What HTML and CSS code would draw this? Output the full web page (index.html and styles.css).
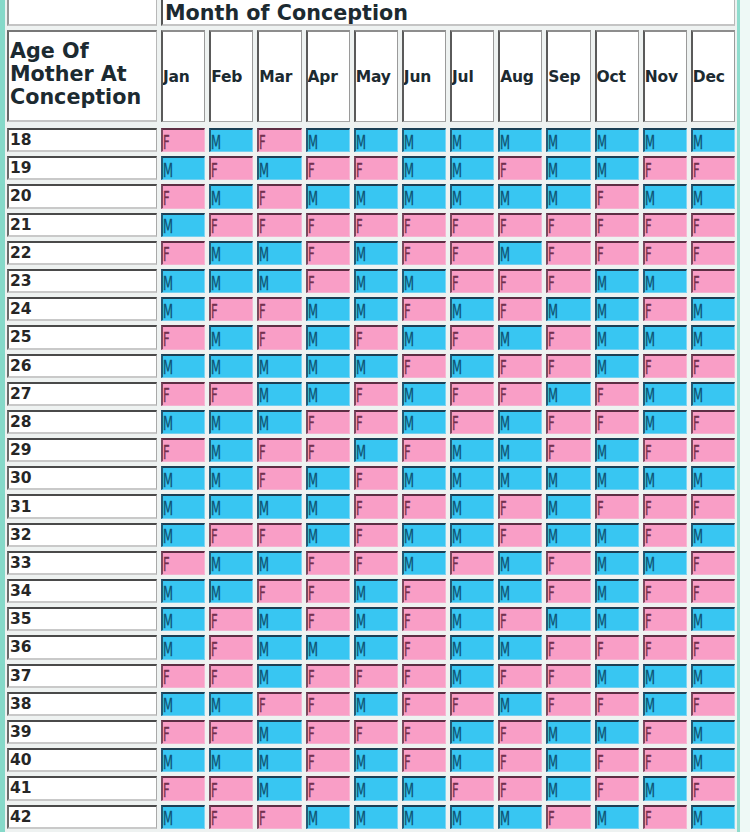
FILE: index.html
```html
<!DOCTYPE html>
<html lang="en">
<head>
<meta charset="utf-8">
<title>Chinese Gender Chart</title>
<link rel="stylesheet" href="styles.css">
</head>
<body>
<div class="page">
  <div class="grid head">
    <div class="hcell blank"></div>
    <div class="hcell title">Month of Conception</div>
    <div class="hcell agehead">Age Of<br>Mother At<br>Conception</div>
    <div class="hcell mon">Jan</div>
    <div class="hcell mon">Feb</div>
    <div class="hcell mon">Mar</div>
    <div class="hcell mon">Apr</div>
    <div class="hcell mon">May</div>
    <div class="hcell mon">Jun</div>
    <div class="hcell mon">Jul</div>
    <div class="hcell mon">Aug</div>
    <div class="hcell mon">Sep</div>
    <div class="hcell mon">Oct</div>
    <div class="hcell mon">Nov</div>
    <div class="hcell mon">Dec</div>
  </div>
  <div class="grid body">
    <div class="age">18</div><div class="c f"><span>F</span></div><div class="c m"><span>M</span></div><div class="c f"><span>F</span></div><div class="c m"><span>M</span></div><div class="c m"><span>M</span></div><div class="c m"><span>M</span></div><div class="c m"><span>M</span></div><div class="c m"><span>M</span></div><div class="c m"><span>M</span></div><div class="c m"><span>M</span></div><div class="c m"><span>M</span></div><div class="c m"><span>M</span></div>
    <div class="age">19</div><div class="c m"><span>M</span></div><div class="c f"><span>F</span></div><div class="c m"><span>M</span></div><div class="c f"><span>F</span></div><div class="c f"><span>F</span></div><div class="c m"><span>M</span></div><div class="c m"><span>M</span></div><div class="c f"><span>F</span></div><div class="c m"><span>M</span></div><div class="c m"><span>M</span></div><div class="c f"><span>F</span></div><div class="c f"><span>F</span></div>
    <div class="age">20</div><div class="c f"><span>F</span></div><div class="c m"><span>M</span></div><div class="c f"><span>F</span></div><div class="c m"><span>M</span></div><div class="c m"><span>M</span></div><div class="c m"><span>M</span></div><div class="c m"><span>M</span></div><div class="c m"><span>M</span></div><div class="c m"><span>M</span></div><div class="c f"><span>F</span></div><div class="c m"><span>M</span></div><div class="c m"><span>M</span></div>
    <div class="age">21</div><div class="c m"><span>M</span></div><div class="c f"><span>F</span></div><div class="c f"><span>F</span></div><div class="c f"><span>F</span></div><div class="c f"><span>F</span></div><div class="c f"><span>F</span></div><div class="c f"><span>F</span></div><div class="c f"><span>F</span></div><div class="c f"><span>F</span></div><div class="c f"><span>F</span></div><div class="c f"><span>F</span></div><div class="c f"><span>F</span></div>
    <div class="age">22</div><div class="c f"><span>F</span></div><div class="c m"><span>M</span></div><div class="c m"><span>M</span></div><div class="c f"><span>F</span></div><div class="c m"><span>M</span></div><div class="c f"><span>F</span></div><div class="c f"><span>F</span></div><div class="c m"><span>M</span></div><div class="c f"><span>F</span></div><div class="c f"><span>F</span></div><div class="c f"><span>F</span></div><div class="c f"><span>F</span></div>
    <div class="age">23</div><div class="c m"><span>M</span></div><div class="c m"><span>M</span></div><div class="c m"><span>M</span></div><div class="c f"><span>F</span></div><div class="c m"><span>M</span></div><div class="c m"><span>M</span></div><div class="c f"><span>F</span></div><div class="c f"><span>F</span></div><div class="c f"><span>F</span></div><div class="c m"><span>M</span></div><div class="c m"><span>M</span></div><div class="c f"><span>F</span></div>
    <div class="age">24</div><div class="c m"><span>M</span></div><div class="c f"><span>F</span></div><div class="c f"><span>F</span></div><div class="c m"><span>M</span></div><div class="c m"><span>M</span></div><div class="c f"><span>F</span></div><div class="c m"><span>M</span></div><div class="c f"><span>F</span></div><div class="c m"><span>M</span></div><div class="c m"><span>M</span></div><div class="c f"><span>F</span></div><div class="c m"><span>M</span></div>
    <div class="age">25</div><div class="c f"><span>F</span></div><div class="c m"><span>M</span></div><div class="c f"><span>F</span></div><div class="c m"><span>M</span></div><div class="c f"><span>F</span></div><div class="c m"><span>M</span></div><div class="c f"><span>F</span></div><div class="c m"><span>M</span></div><div class="c f"><span>F</span></div><div class="c m"><span>M</span></div><div class="c m"><span>M</span></div><div class="c m"><span>M</span></div>
    <div class="age">26</div><div class="c m"><span>M</span></div><div class="c m"><span>M</span></div><div class="c m"><span>M</span></div><div class="c m"><span>M</span></div><div class="c m"><span>M</span></div><div class="c f"><span>F</span></div><div class="c m"><span>M</span></div><div class="c f"><span>F</span></div><div class="c f"><span>F</span></div><div class="c m"><span>M</span></div><div class="c f"><span>F</span></div><div class="c f"><span>F</span></div>
    <div class="age">27</div><div class="c f"><span>F</span></div><div class="c f"><span>F</span></div><div class="c m"><span>M</span></div><div class="c m"><span>M</span></div><div class="c f"><span>F</span></div><div class="c m"><span>M</span></div><div class="c f"><span>F</span></div><div class="c f"><span>F</span></div><div class="c m"><span>M</span></div><div class="c f"><span>F</span></div><div class="c m"><span>M</span></div><div class="c m"><span>M</span></div>
    <div class="age">28</div><div class="c m"><span>M</span></div><div class="c m"><span>M</span></div><div class="c m"><span>M</span></div><div class="c f"><span>F</span></div><div class="c f"><span>F</span></div><div class="c m"><span>M</span></div><div class="c f"><span>F</span></div><div class="c m"><span>M</span></div><div class="c f"><span>F</span></div><div class="c f"><span>F</span></div><div class="c m"><span>M</span></div><div class="c f"><span>F</span></div>
    <div class="age">29</div><div class="c f"><span>F</span></div><div class="c m"><span>M</span></div><div class="c f"><span>F</span></div><div class="c f"><span>F</span></div><div class="c m"><span>M</span></div><div class="c f"><span>F</span></div><div class="c m"><span>M</span></div><div class="c m"><span>M</span></div><div class="c f"><span>F</span></div><div class="c m"><span>M</span></div><div class="c f"><span>F</span></div><div class="c f"><span>F</span></div>
    <div class="age">30</div><div class="c m"><span>M</span></div><div class="c m"><span>M</span></div><div class="c f"><span>F</span></div><div class="c m"><span>M</span></div><div class="c f"><span>F</span></div><div class="c m"><span>M</span></div><div class="c m"><span>M</span></div><div class="c m"><span>M</span></div><div class="c m"><span>M</span></div><div class="c m"><span>M</span></div><div class="c m"><span>M</span></div><div class="c m"><span>M</span></div>
    <div class="age">31</div><div class="c m"><span>M</span></div><div class="c m"><span>M</span></div><div class="c m"><span>M</span></div><div class="c m"><span>M</span></div><div class="c f"><span>F</span></div><div class="c f"><span>F</span></div><div class="c m"><span>M</span></div><div class="c f"><span>F</span></div><div class="c m"><span>M</span></div><div class="c f"><span>F</span></div><div class="c f"><span>F</span></div><div class="c f"><span>F</span></div>
    <div class="age">32</div><div class="c m"><span>M</span></div><div class="c f"><span>F</span></div><div class="c f"><span>F</span></div><div class="c m"><span>M</span></div><div class="c f"><span>F</span></div><div class="c m"><span>M</span></div><div class="c m"><span>M</span></div><div class="c f"><span>F</span></div><div class="c m"><span>M</span></div><div class="c m"><span>M</span></div><div class="c f"><span>F</span></div><div class="c m"><span>M</span></div>
    <div class="age">33</div><div class="c f"><span>F</span></div><div class="c m"><span>M</span></div><div class="c m"><span>M</span></div><div class="c f"><span>F</span></div><div class="c f"><span>F</span></div><div class="c m"><span>M</span></div><div class="c f"><span>F</span></div><div class="c m"><span>M</span></div><div class="c f"><span>F</span></div><div class="c m"><span>M</span></div><div class="c m"><span>M</span></div><div class="c f"><span>F</span></div>
    <div class="age">34</div><div class="c m"><span>M</span></div><div class="c m"><span>M</span></div><div class="c f"><span>F</span></div><div class="c f"><span>F</span></div><div class="c m"><span>M</span></div><div class="c f"><span>F</span></div><div class="c m"><span>M</span></div><div class="c m"><span>M</span></div><div class="c f"><span>F</span></div><div class="c m"><span>M</span></div><div class="c f"><span>F</span></div><div class="c f"><span>F</span></div>
    <div class="age">35</div><div class="c m"><span>M</span></div><div class="c f"><span>F</span></div><div class="c m"><span>M</span></div><div class="c f"><span>F</span></div><div class="c m"><span>M</span></div><div class="c f"><span>F</span></div><div class="c m"><span>M</span></div><div class="c f"><span>F</span></div><div class="c m"><span>M</span></div><div class="c m"><span>M</span></div><div class="c f"><span>F</span></div><div class="c m"><span>M</span></div>
    <div class="age">36</div><div class="c m"><span>M</span></div><div class="c f"><span>F</span></div><div class="c m"><span>M</span></div><div class="c m"><span>M</span></div><div class="c m"><span>M</span></div><div class="c f"><span>F</span></div><div class="c m"><span>M</span></div><div class="c m"><span>M</span></div><div class="c f"><span>F</span></div><div class="c f"><span>F</span></div><div class="c f"><span>F</span></div><div class="c f"><span>F</span></div>
    <div class="age">37</div><div class="c f"><span>F</span></div><div class="c f"><span>F</span></div><div class="c m"><span>M</span></div><div class="c f"><span>F</span></div><div class="c f"><span>F</span></div><div class="c f"><span>F</span></div><div class="c m"><span>M</span></div><div class="c f"><span>F</span></div><div class="c f"><span>F</span></div><div class="c m"><span>M</span></div><div class="c m"><span>M</span></div><div class="c m"><span>M</span></div>
    <div class="age">38</div><div class="c m"><span>M</span></div><div class="c m"><span>M</span></div><div class="c f"><span>F</span></div><div class="c f"><span>F</span></div><div class="c m"><span>M</span></div><div class="c f"><span>F</span></div><div class="c f"><span>F</span></div><div class="c m"><span>M</span></div><div class="c f"><span>F</span></div><div class="c f"><span>F</span></div><div class="c m"><span>M</span></div><div class="c f"><span>F</span></div>
    <div class="age">39</div><div class="c f"><span>F</span></div><div class="c f"><span>F</span></div><div class="c m"><span>M</span></div><div class="c f"><span>F</span></div><div class="c f"><span>F</span></div><div class="c f"><span>F</span></div><div class="c m"><span>M</span></div><div class="c f"><span>F</span></div><div class="c m"><span>M</span></div><div class="c m"><span>M</span></div><div class="c f"><span>F</span></div><div class="c m"><span>M</span></div>
    <div class="age">40</div><div class="c m"><span>M</span></div><div class="c m"><span>M</span></div><div class="c m"><span>M</span></div><div class="c f"><span>F</span></div><div class="c m"><span>M</span></div><div class="c f"><span>F</span></div><div class="c m"><span>M</span></div><div class="c f"><span>F</span></div><div class="c m"><span>M</span></div><div class="c f"><span>F</span></div><div class="c f"><span>F</span></div><div class="c m"><span>M</span></div>
    <div class="age">41</div><div class="c f"><span>F</span></div><div class="c f"><span>F</span></div><div class="c m"><span>M</span></div><div class="c f"><span>F</span></div><div class="c m"><span>M</span></div><div class="c m"><span>M</span></div><div class="c f"><span>F</span></div><div class="c f"><span>F</span></div><div class="c m"><span>M</span></div><div class="c f"><span>F</span></div><div class="c m"><span>M</span></div><div class="c f"><span>F</span></div>
    <div class="age">42</div><div class="c m"><span>M</span></div><div class="c f"><span>F</span></div><div class="c f"><span>F</span></div><div class="c m"><span>M</span></div><div class="c m"><span>M</span></div><div class="c m"><span>M</span></div><div class="c m"><span>M</span></div><div class="c m"><span>M</span></div><div class="c f"><span>F</span></div><div class="c m"><span>M</span></div><div class="c f"><span>F</span></div><div class="c m"><span>M</span></div>
  </div>
</div>
</body>
</html>
```
FILE: styles.css
```css
html, body {
  margin: 0;
  padding: 0;
}
body {
  background: #eef9f6;
  font-family: "DejaVu Sans", Verdana, sans-serif;
  overflow: hidden;
}
.page {
  width: 728px;
  height: 832px;
  overflow: hidden;
  border-left: 5px solid #86d9c9;
  border-right: 3px solid #8fdccd;
  padding: 0 2px;
  background: #eef2f1;
}
.grid {
  display: grid;
  grid-template-columns: 150px repeat(12, 1fr);
  column-gap: 4px;
  row-gap: 4px;
}
.head {
  margin-top: -3px;
  grid-template-rows: 29px 92px;
}
.body {
  margin-top: 6px;
  grid-template-rows: repeat(25, 24.2px);
}
.hcell {
  box-sizing: border-box;
  background: #ffffff;
  border-top: 1px solid #8a8a8a;
  border-left: 2px solid #6a6a6a;
  border-right: 1px solid #b8b8b8;
  border-bottom: 2px solid #c4c4c4;
  color: #1c2a31;
  font-weight: bold;
}
.title {
  grid-column: 2 / span 12;
  font-size: 20.7px;
  line-height: 24px;
  padding: 3px 0 0 2px;
  border-left: 2px solid #555;
}
.blank {
  border-left: 2px solid #999;
}
.agehead {
  font-size: 20.7px;
  line-height: 23px;
  padding: 8px 0 0 1px;
  border-top: 2px solid #777;
  border-left: 2px solid #666;
}
.mon {
  display: flex;
  align-items: center;
  font-size: 15.5px;
  padding-left: 0;
  letter-spacing: -0.2px;
  border-top: 2px solid #8d8d8d;
  border-left: 2px solid #5a5a5a;
  border-right: 1px solid #9a9a9a;
  border-bottom: 1px solid #a8a8a8;
  overflow: hidden;
  white-space: nowrap;
}
.age {
  box-sizing: border-box;
  background: #ffffff;
  border-top: 2px solid #4a4a4a;
  border-left: 2px solid #6a6a6a;
  border-right: 1px solid #a9a9a9;
  border-bottom: 2px solid #c9c9c9;
  display: flex;
  align-items: center;
  padding-left: 1px;
  font-weight: bold;
  font-size: 15.5px;
  color: #262626;
}
.c {
  box-sizing: border-box;
  display: flex;
  align-items: center;
  overflow: hidden;
  border-top: 2px solid;
  border-left: 2px solid;
  border-right: 1px solid;
  border-bottom: 1px solid;
}
.c span {
  display: inline-block;
  font-size: 20px;
  line-height: 20px;
  transform: scaleX(0.58);
  transform-origin: left center;
  margin-top: 2px;
  -webkit-text-stroke: 0.35px currentColor;
}
.f {
  background: #f99ec6;
  border-top-color: #5e2e44;
  border-left-color: #7a4a60;
  border-right-color: #f7b8d4;
  border-bottom-color: #f4b3d0;
  color: #74304f;
}
.m {
  background: #38c6f2;
  border-top-color: #1b3f55;
  border-left-color: #245a76;
  border-right-color: #7fd7f5;
  border-bottom-color: #74d0f0;
  color: #0f5473;
}
```
